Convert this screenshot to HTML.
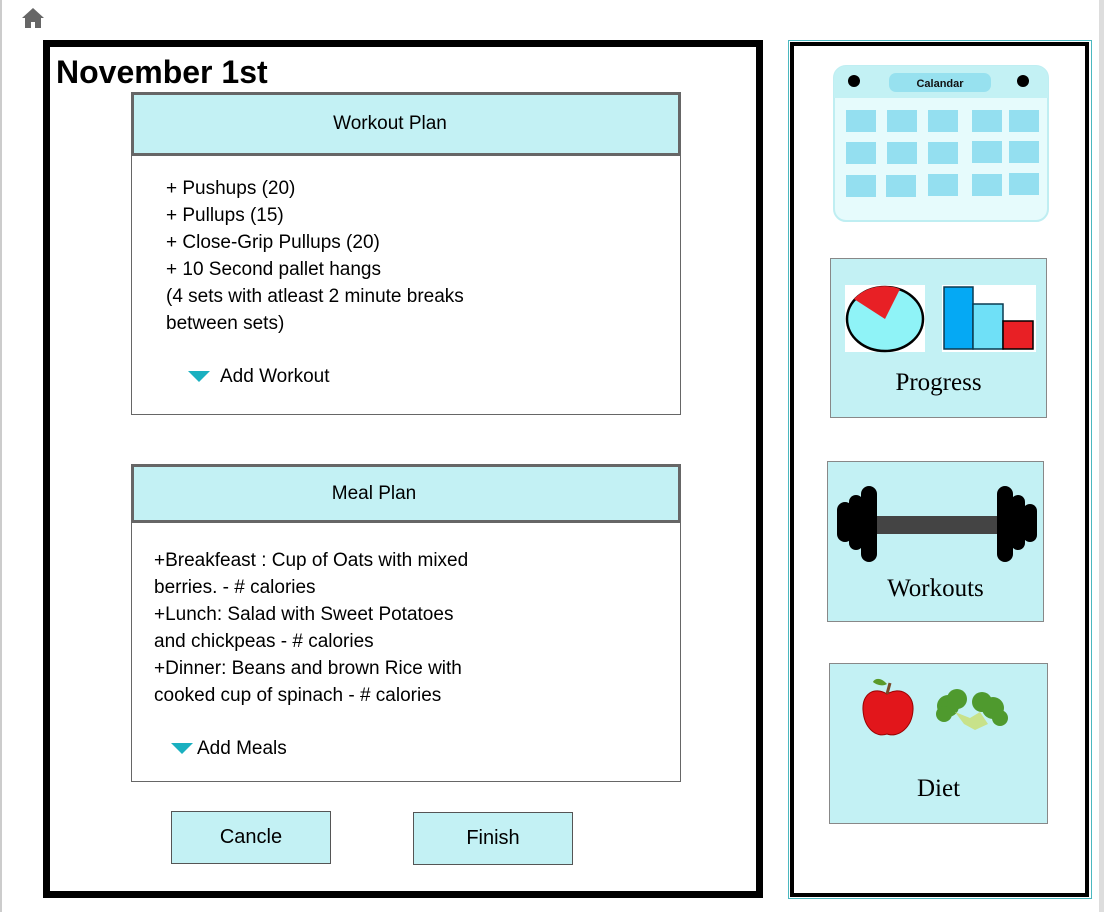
<!DOCTYPE html>
<html><head><style>
*{margin:0;padding:0;box-sizing:border-box}
body{width:1104px;height:912px;background:#fff;position:relative;overflow:hidden;font-family:"Liberation Sans",sans-serif;color:#000}
.a{position:absolute}
.hdr{background:#c3f1f4;border:3px solid #666;display:flex;align-items:center;justify-content:center;font-size:19px}
.box{border:1px solid #666;background:#fff}
.txt{font-size:19px;line-height:27px}
.btn{background:#c3f1f4;border:1px solid #555;display:flex;align-items:center;justify-content:center;font-size:20px}
.tile{background:#c3f1f4;border:1px solid #888;font-family:"Liberation Serif",serif;font-size:25px;text-align:center}
.tri{display:inline-block;width:0;height:0;border-left:11px solid transparent;border-right:11px solid transparent;border-top:11px solid #1ab0c0;vertical-align:middle;margin-right:10px}
</style></head><body>
<div class="a" style="left:0;top:0;width:2px;height:912px;background:#ccc"></div>
<div class="a" style="left:1099px;top:0;width:5px;height:912px;background:#ddd"></div>
<svg class="a" style="left:21px;top:7px" width="24" height="22" viewBox="0 0 24 22"><path d="M12 1 L1 11 H4 V21 H10 V15 H14 V21 H20 V11 H23 Z" fill="#666"/></svg>

<div class="a" style="left:43px;top:40px;width:720px;height:858px;border:7px solid #000"></div>
<div class="a" style="left:56px;top:54px;font-size:32px;font-weight:bold">November 1st</div>

<div class="a box" style="left:131px;top:92px;width:550px;height:323px"></div>
<div class="a hdr" style="left:131px;top:92px;width:550px;height:64px;padding-right:32px">Workout Plan</div>
<div class="a txt" style="left:166px;top:175px">+ Pushups (20)<br>+ Pullups (15)<br>+ Close-Grip Pullups (20)<br>+ 10 Second pallet hangs<br>(4 sets with atleast 2 minute breaks<br>between sets)</div>
<div class="a txt" style="left:188px;top:363px"><span class="tri"></span>Add Workout</div>

<div class="a box" style="left:131px;top:464px;width:550px;height:318px"></div>
<div class="a hdr" style="left:131px;top:464px;width:550px;height:59px;padding-right:64px">Meal Plan</div>
<div class="a txt" style="left:154px;top:547px">+Breakfeast : Cup of Oats with mixed<br>berries. - # calories<br>+Lunch: Salad with Sweet Potatoes<br>and chickpeas - # calories<br>+Dinner: Beans and brown Rice with<br>cooked cup of spinach - # calories</div>
<div class="a txt" style="left:171px;top:735px"><span class="tri" style="margin-right:4px"></span>Add Meals</div>

<div class="a btn" style="left:171px;top:811px;width:160px;height:53px">Cancle</div>
<div class="a btn" style="left:413px;top:812px;width:160px;height:53px">Finish</div>

<div class="a" style="left:788px;top:40px;width:304px;height:859px;border:1px solid #4bb8c0"></div>
<div class="a" style="left:790px;top:42px;width:299px;height:855px;border:4px solid #000"></div>

<svg class="a" style="left:833px;top:65px" width="216" height="157" viewBox="0 0 216 157">
<rect x="1" y="1" width="214" height="155" rx="12" fill="#e6fbfc" stroke="#bfeef2" stroke-width="2"/>
<path d="M1 13 a12 12 0 0 1 12 -12 H203 a12 12 0 0 1 12 12 V33 H1 Z" fill="#c3f1f4"/>
<circle cx="21" cy="16" r="6" fill="#000"/><circle cx="190" cy="16" r="6" fill="#000"/>
<rect x="56" y="8" width="102" height="19" rx="7" fill="#97e1ef"/>
<text x="107" y="22" text-anchor="middle" font-family="Liberation Sans" font-size="11" font-weight="bold" fill="#111">Calandar</text>
<g fill="#94dff0">
<rect x="13" y="45" width="30" height="22"/><rect x="54" y="45" width="30" height="22"/><rect x="95" y="45" width="30" height="22"/><rect x="139" y="45" width="30" height="22"/><rect x="176" y="45" width="30" height="22"/>
<rect x="13" y="77" width="30" height="22"/><rect x="54" y="77" width="30" height="22"/><rect x="95" y="77" width="30" height="22"/><rect x="139" y="76" width="30" height="22"/><rect x="176" y="76" width="30" height="22"/>
<rect x="13" y="110" width="30" height="22"/><rect x="53" y="110" width="30" height="22"/><rect x="95" y="109" width="30" height="22"/><rect x="139" y="109" width="30" height="22"/><rect x="176" y="108" width="30" height="22"/>
</g></svg>

<div class="a tile" style="left:830px;top:258px;width:217px;height:160px"><div style="position:absolute;left:0;right:0;top:110px">Progress</div></div>
<svg class="a" style="left:845px;top:285px" width="192" height="68" viewBox="0 0 192 68">
<rect x="0" y="0" width="80" height="67" fill="#fff"/>
<ellipse cx="40" cy="34" rx="38" ry="32" fill="#8ff3f7" stroke="#000" stroke-width="2.5"/>
<path d="M40 34 L9 14 A38 32 0 0 1 55 4 Z" fill="#e82025"/>
<rect x="97" y="0" width="94" height="67" fill="#fff"/>
<rect x="99" y="2" width="29" height="62" fill="#05a9f4" stroke="#0a3a50" stroke-width="1.5"/>
<rect x="128" y="19" width="30" height="45" fill="#6fe0f7" stroke="#0a3a50" stroke-width="1.5"/>
<rect x="158" y="36" width="30" height="28" fill="#e82025" stroke="#000" stroke-width="1.5"/>
</svg>

<div class="a tile" style="left:827px;top:461px;width:217px;height:161px"><div style="position:absolute;left:0;right:0;top:113px">Workouts</div></div>
<svg class="a" style="left:837px;top:485px" width="200" height="78" viewBox="0 0 200 78">
<rect x="40" y="31" width="124" height="18" fill="#444"/>
<g fill="#000">
<rect x="0" y="17" width="16" height="40" rx="8"/><rect x="12" y="10" width="14" height="55" rx="7"/><rect x="24" y="1" width="16" height="76" rx="8"/>
<rect x="160" y="1" width="16" height="76" rx="8"/><rect x="174" y="10" width="14" height="55" rx="7"/><rect x="186" y="19" width="14" height="38" rx="7"/>
</g></svg>

<div class="a tile" style="left:829px;top:663px;width:219px;height:161px"><div style="position:absolute;left:0;right:0;top:111px">Diet</div></div>
<svg class="a" style="left:860px;top:674px" width="156" height="66" viewBox="0 0 156 66">
<path d="M27 20 C14 12 2 20 3 36 C4 54 16 64 27 60 C38 64 52 54 53 36 C54 20 40 12 27 20 Z" fill="#e2161b" stroke="#900" stroke-width="1"/>
<path d="M27 20 L30 9" stroke="#7a4a2a" stroke-width="3"/>
<path d="M27 10 C20 2 14 5 13 8 C18 12 24 12 27 10 Z" fill="#5a9a2a"/>
<g fill="#4f9a2e"><circle cx="88" cy="32" r="11"/><circle cx="97" cy="25" r="10"/><circle cx="84" cy="40" r="8"/><circle cx="122" cy="28" r="10"/><circle cx="133" cy="34" r="11"/><circle cx="140" cy="44" r="8"/></g>
<path d="M95 38 L110 44 L120 38 L128 50 L115 56 L104 50 Z" fill="#c8e28a"/>
</svg>
</body></html>
